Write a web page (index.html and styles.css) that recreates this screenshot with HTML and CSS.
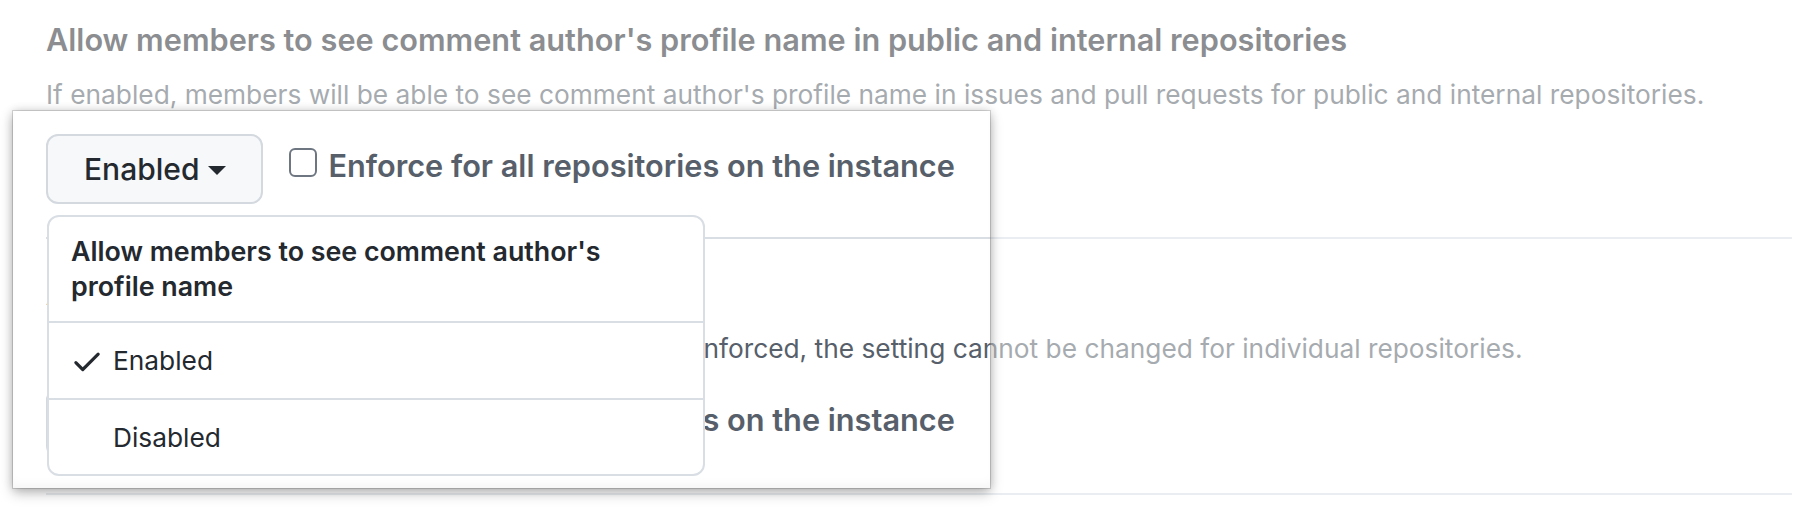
FILE: index.html
```html
<!DOCTYPE html>
<html lang="en">
<head>
<meta charset="utf-8">
<title>Comment author profile name setting</title>
<link rel="stylesheet" href="styles.css">
</head>
<body>
<main class="settings">
  <section class="setting">
    <h3 class="setting-title">Allow members to see comment author's profile name in public and internal repositories</h3>
    <p class="setting-note">If enabled, members will be able to see comment author's profile name in issues and pull requests for public and internal repositories.</p>
    <div class="setting-controls">
      <div class="select-wrap">
        <button class="btn" type="button">Enabled<span class="caret"></span></button>
        <div class="select-menu">
          <div class="select-menu-header">Allow members to see comment author's profile name</div>
          <div class="select-menu-item">
            <svg class="check" viewBox="0 0 16 16" aria-hidden="true"><path d="M13.78 4.22a.75.75 0 0 1 0 1.06l-7.25 7.25a.75.75 0 0 1-1.06 0L2.22 9.28a.75.75 0 0 1 1.06-1.06L6 10.94l6.72-6.72a.75.75 0 0 1 1.06 0Z"/></svg>
            <span>Enabled</span>
          </div>
          <div class="select-menu-item indented"><span>Disabled</span></div>
        </div>
      </div>
      <label class="enforce"><input class="checkbox" type="checkbox">Enforce for all repositories on the instance</label>
    </div>
  </section>
  <section class="setting">
    <h3 class="setting-title">Allow repository admins to override</h3>
    <p class="setting-note">Repository administrators can change the option. If enforced, the setting cannot be changed for individual repositories.</p>
    <div class="setting-controls">
      <div class="select-wrap">
        <button class="btn" type="button">Enabled<span class="caret"></span></button>
      </div>
      <label class="enforce"><input class="checkbox" type="checkbox">Enforce for all repositories on the instance</label>
    </div>
  </section>
</main>
<div class="spotlight" aria-hidden="true"></div>
</body>
</html>
```
FILE: styles.css
```css
html, body {
  margin: 0;
  padding: 0;
  background: #ffffff;
}
body {
  width: 1820px;
  height: 512px;
  overflow: hidden;
  position: relative;
  font-family: "Inter", "Liberation Sans", sans-serif;
  color: #24292f;
}
.settings {
  padding: 20px 28px 0 46px;
}
.setting {
  padding-bottom: 33px;
  border-bottom: 2px solid #d8dee4;
}
.setting + .setting {
  padding-top: 35px;
  padding-bottom: 35px;
}
.setting-title {
  margin: 0;
  font-size: 30.7px;
  line-height: 40px;
  font-weight: 600;
  color: #24292f;
  white-space: nowrap;
}
.setting-note {
  margin: 17px 0 0;
  font-size: 26.3px;
  line-height: 36px;
  color: #57606a;
  white-space: nowrap;
}
.setting-controls {
  margin-top: 21px;
  display: flex;
  align-items: flex-start;
  gap: 26px;
}
.select-wrap {
  position: relative;
}
.btn {
  box-sizing: border-box;
  height: 70px;
  display: flex;
  align-items: center;
  padding: 0 35px 0 36px;
  border: 2px solid #d3d9df;
  border-radius: 12px;
  background: #f6f8fa;
  font-family: inherit;
  font-size: 30px;
  font-weight: 500;
  color: #24292f;
}
.caret {
  width: 0;
  height: 0;
  margin: 3px 0 0 9px;
  border-top: 9px solid #24292f;
  border-left: 9px solid transparent;
  border-right: 9px solid transparent;
}
.enforce {
  display: flex;
  align-items: flex-start;
  margin-top: 12px;
  font-size: 30.7px;
  line-height: 40px;
  font-weight: 600;
  color: #57606a;
  white-space: nowrap;
}
.checkbox {
  appearance: none;
  -webkit-appearance: none;
  box-sizing: border-box;
  width: 28px;
  height: 29px;
  margin: 2px 11px 0 0;
  border: 2px solid #6e7781;
  border-radius: 6px;
  background: #ffffff;
}
.select-menu {
  position: absolute;
  left: 1px;
  top: 81px;
  z-index: 3;
  box-sizing: border-box;
  width: 658px;
  background: #ffffff;
  border: 2px solid #d8dee4;
  border-radius: 12px;
  overflow: hidden;
  color: #24292f;
}
.select-menu-header {
  padding: 17px 40px 17px 22px;
  font-size: 26.8px;
  line-height: 35px;
  font-weight: 600;
}
.select-menu-item {
  display: flex;
  align-items: center;
  height: 75px;
  padding-left: 21px;
  border-top: 2px solid #d8dee4;
  font-size: 26.3px;
}
.select-menu-item + .select-menu-item {
  height: 74px;
}
.select-menu-item.indented {
  padding-left: 64px;
}
.check {
  width: 34px;
  height: 34px;
  margin-right: 9px;
  fill: #24292f;
}
.spotlight {
  position: absolute;
  left: 13px;
  top: 111px;
  width: 977px;
  height: 377px;
  z-index: 1;
  pointer-events: none;
  box-shadow:
    0 0 0 1px rgba(0, 0, 0, 0.14),
    0 5px 12px rgba(0, 0, 0, 0.26),
    0 0 9px rgba(0, 0, 0, 0.16),
    inset 0 -8px 12px -6px rgba(0, 0, 0, 0.05),
    0 0 0 3000px rgba(255, 255, 255, 0.47);
}
```
